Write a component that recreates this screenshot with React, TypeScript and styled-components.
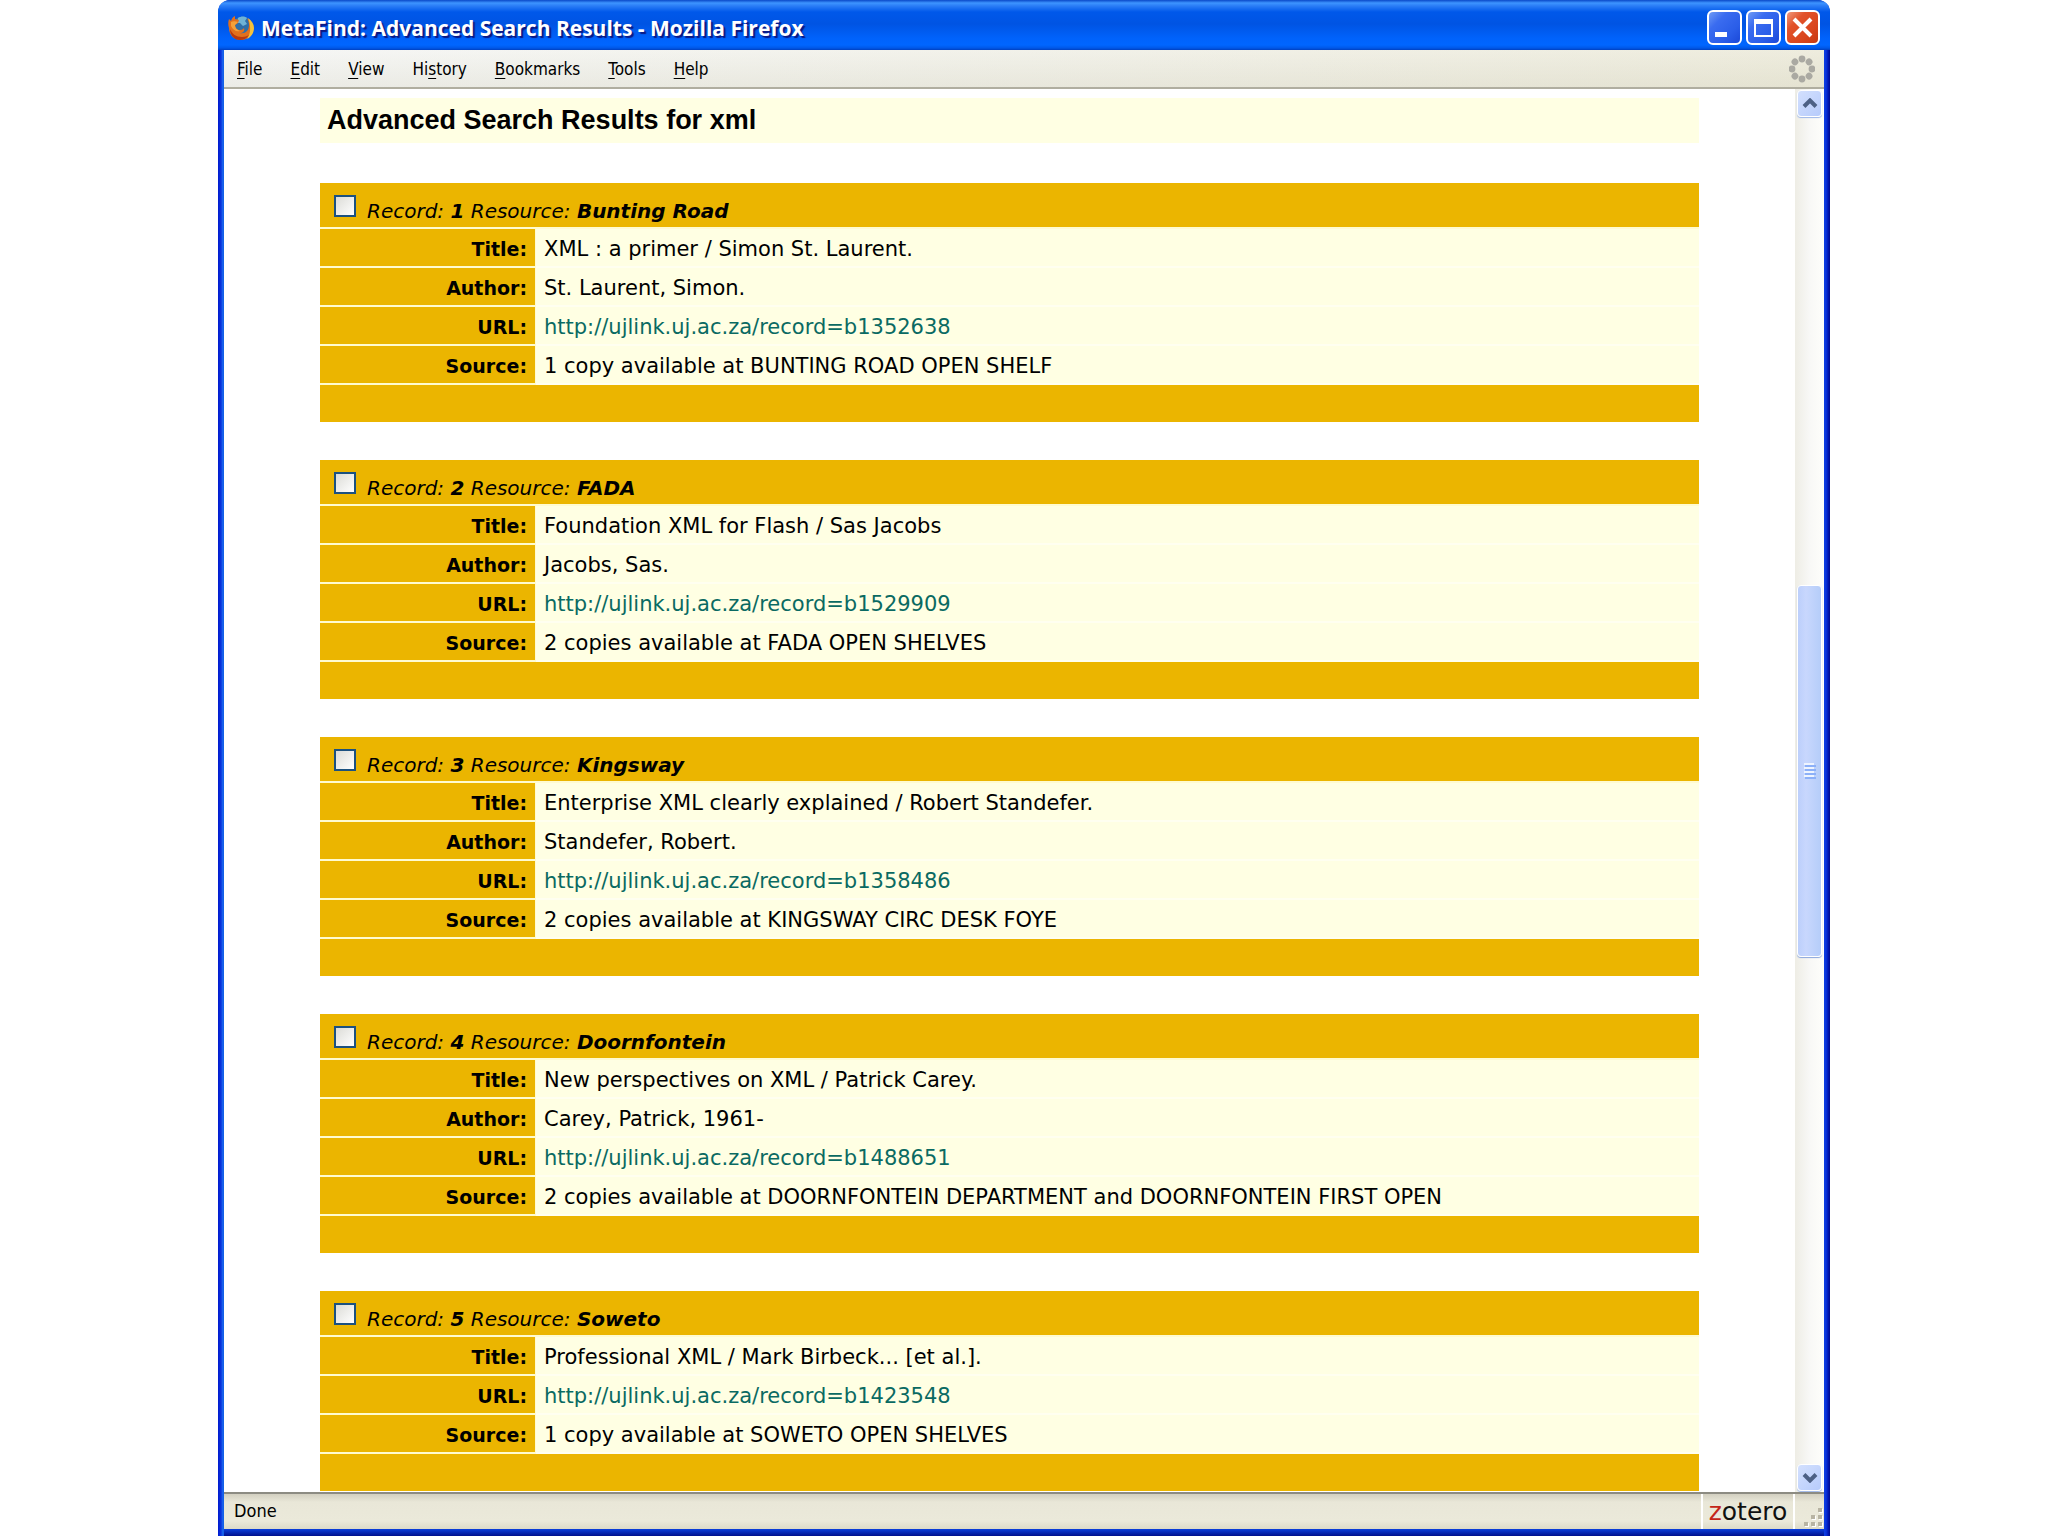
import React from "react";
import styled, { createGlobalStyle } from "styled-components";

const GlobalStyle = createGlobalStyle`
  * { box-sizing: border-box; }
  body { margin: 0; background: #fff; color: #000; }
`;

const UI_FONT = '"DejaVu Sans Condensed", "DejaVu Sans", sans-serif';
const PAGE_FONT = '"DejaVu Sans", Verdana, sans-serif';

const Window = styled.div`
  display: flex;
  flex-direction: column;
  height: 100vh;
  margin: 0 218px;
  overflow: hidden;
  border-radius: 12px 12px 0 0;
  background: #0842dc;
`;

const TitleBar = styled.header`
  flex: none;
  display: flex;
  align-items: center;
  gap: 6px;
  height: 50px;
  padding: 4px 10px 0;
  background: linear-gradient(#0a48c8 0, #3d94ff 3px, #2a7cf6 6px, #0058ea 12px, #0054e3 24px, #0062fb 38px, #0066ff 45px, #0058e8 48px, #0040c0 50px);
`;

const WindowTitle = styled.h1`
  flex: 1;
  margin: 0;
  padding-top: 2px;
  font: bold 21px/28px "Open Sans", "Trebuchet MS", sans-serif;
  color: #fff;
  text-shadow: 2px 2px 1px #0a1883;
  white-space: nowrap;
`;

const WindowButtons = styled.div`
  display: flex;
  gap: 4px;
`;

const WindowButton = styled.button<{ $close?: boolean }>`
  display: grid;
  place-items: center;
  width: 35px;
  height: 35px;
  padding: 0;
  border: 2px solid #fff;
  border-radius: 6px;
  background: ${(p) =>
    p.$close
      ? "linear-gradient(135deg, #f0997c, #e2532b 30%, #d9451c 70%, #c63a12)"
      : "linear-gradient(135deg, #6f9bf5, #3a6cf0 30%, #2a5de8 70%, #1b48d8)"};
`;

const Frame = styled.div`
  flex: 1;
  min-height: 0;
  display: flex;
  flex-direction: column;
  padding: 0 6px 7px;
  background:
    linear-gradient(90deg, #0019cf 0, #0a35dc 3px, #1f6cf0 5px, #0855dd 6px) left / 6px 100% no-repeat,
    linear-gradient(270deg, #000a8c 0, #0019b8 2px, #0a35dc 4px, #0d3fe2 6px) right / 6px 100% no-repeat,
    linear-gradient(0deg, #00108c 0, #0b3fdc 7px);
`;

const MenuBar = styled.nav`
  flex: none;
  display: flex;
  align-items: center;
  gap: 28px;
  height: 39px;
  padding: 0 9px 0 13px;
  border-bottom: 2px solid #b0aea0;
  background: linear-gradient(rgba(255, 255, 255, 0.15), rgba(210, 208, 190, 0.25)), linear-gradient(90deg, #f4f5f4, #ebe9d8);
`;

const MenuItem = styled.button`
  padding: 0;
  border: 0;
  background: none;
  font: 17px/24px ${UI_FONT};
  color: #000;

  u {
    text-underline-offset: 3px;
  }
`;

const Throbber = styled.svg`
  margin-left: auto;
`;

const Viewport = styled.div`
  flex: 1;
  min-height: 0;
  display: flex;
  background: #fff;
`;

const Page = styled.main`
  flex: 1;
  min-width: 0;
  overflow: hidden;
  padding: 9px 96px 0;
  font-family: ${PAGE_FONT};
`;

const Heading = styled.h2`
  margin: 0 0 40px;
  padding: 0 7px;
  background: #ffffe3;
  font: bold 27px/45px "Liberation Sans", Arial, sans-serif;
`;

const Record = styled.table`
  width: 100%;
  margin-bottom: 38px;
  border-collapse: separate;
  border-spacing: 0;
  table-layout: fixed;
`;

const LabelColumn = styled.col`
  width: 216px;
`;

const RecordHead = styled.th`
  height: 46px;
  padding: 12px 14px 0;
  border-bottom: 2px solid #fffbd0;
  background: #ebb500;
  text-align: left;
  vertical-align: top;
  font-weight: normal;
`;

const RecordLabel = styled.label`
  display: flex;
  align-items: flex-start;
  gap: 11px;
  font: italic 20px/24px ${PAGE_FONT};

  span {
    padding-top: 4px;
  }
`;

const Tick = styled.input`
  appearance: none;
  width: 22px;
  height: 22px;
  margin: 0;
  border: 2px solid #1c5180;
  background: linear-gradient(135deg, #dcdcd7, #fff);
`;

const Label = styled.th`
  height: 39px;
  padding: 2px 8px 0;
  border-bottom: 2px solid #fffbd0;
  border-right: 1px solid #fffbd0;
  background: #ebb500;
  text-align: right;
  font: bold 19px/26px ${PAGE_FONT};
`;

const Value = styled.td`
  height: 39px;
  padding: 3px 8px 0;
  border-bottom: 2px solid #fffff0;
  background: #ffffe3;
  font: 21px/26px ${PAGE_FONT};
  white-space: nowrap;
`;

const RecordFoot = styled.td`
  height: 37px;
  padding: 0;
  background: #ebb500;
`;

const Link = styled.a`
  color: #0a6a62;
  text-decoration: none;
`;

const ScrollBar = styled.div`
  flex: none;
  display: flex;
  flex-direction: column;
  width: 29px;
  padding: 1px 2px;
  background: linear-gradient(90deg, #eeede5, #f8f8f6 50%, #fefefb);
`;

const ScrollButton = styled.button`
  flex: none;
  display: grid;
  place-items: center;
  width: 25px;
  height: 27px;
  padding: 0;
  border: 1px solid #fff;
  border-radius: 4px;
  background: linear-gradient(135deg, #d3e0fe, #b6cbfb);
  box-shadow: 0 1px 1px #9db6e8;
`;

const ScrollSpace = styled.div<{ $share: number }>`
  flex: ${(p) => p.$share} 0 0;
`;

const ScrollThumb = styled.div`
  flex: 371 0 0;
  display: grid;
  place-items: center;
  width: 25px;
  border: 1px solid #fff;
  border-radius: 4px;
  background: linear-gradient(90deg, #bccffb, #c8d7fd 35%, #b5cdf9);
  box-shadow: 0 1px 1px #8aa6dc;
`;

const StatusBar = styled.footer`
  flex: none;
  display: flex;
  align-items: stretch;
  height: 37px;
  border-top: 2px solid #8c8b82;
  background: linear-gradient(#d2cfc0 0, #e9e7d8 8px, #ebe9da 27px, #dcdac8 35px);
  font: 18px/34px ${UI_FONT};
`;

const StatusText = styled.div`
  flex: 1;
  padding-left: 10px;
`;

const Zotero = styled.button`
  width: 94px;
  padding: 0;
  border: 0;
  border-left: 2px solid #fff;
  border-right: 2px solid #fff;
  background: none;
  font: 25px/30px ${PAGE_FONT};
  color: #111;

  span {
    color: #c4261a;
  }
`;

const ResizeGrip = styled.svg`
  flex: none;
  align-self: flex-end;
`;

type Row = { label: string; value: string; link?: boolean };
type RecordData = { resource: string; rows: Row[] };

const record = (resource: string, title: string, author: string | null, id: string, source: string): RecordData => ({
  resource,
  rows: [
    { label: "Title:", value: title },
    ...(author ? [{ label: "Author:", value: author }] : []),
    { label: "URL:", value: `http://ujlink.uj.ac.za/record=${id}`, link: true },
    { label: "Source:", value: source },
  ],
});

const records: RecordData[] = [
  record("Bunting Road", "XML : a primer / Simon St. Laurent.", "St. Laurent, Simon.", "b1352638", "1 copy available at BUNTING ROAD OPEN SHELF"),
  record("FADA", "Foundation XML for Flash / Sas Jacobs", "Jacobs, Sas.", "b1529909", "2 copies available at FADA OPEN SHELVES"),
  record("Kingsway", "Enterprise XML clearly explained / Robert Standefer.", "Standefer, Robert.", "b1358486", "2 copies available at KINGSWAY CIRC DESK FOYE"),
  record("Doornfontein", "New perspectives on XML / Patrick Carey.", "Carey, Patrick, 1961-", "b1488651", "2 copies available at DOORNFONTEIN DEPARTMENT and DOORNFONTEIN FIRST OPEN"),
  record("Soweto", "Professional XML / Mark Birbeck... [et al.].", null, "b1423548", "1 copy available at SOWETO OPEN SHELVES"),
];

const menus = [
  ["", "F", "ile"],
  ["", "E", "dit"],
  ["", "V", "iew"],
  ["Hi", "s", "tory"],
  ["", "B", "ookmarks"],
  ["", "T", "ools"],
  ["", "H", "elp"],
];

const FirefoxIcon = () => (
  <svg width="27" height="27" viewBox="0 0 27 27" aria-hidden="true">
    <circle cx="14" cy="12" r="9.5" fill="#2f6ea8" />
    <path d="M10 4c3-2 7-2 9 0l-2 3 2 3-4 2-3-3-3 0z" fill="#6fb3d6" />
    <path d="M1 5l2 2c1-3 2-4 4-5l0 3 4 1-1 3-3 2c0 3 2 5 5 5 2 0 3-1 4-2 1 3-1 5-4 5 5 1 9-2 9-8 0-3-1-5-2-7 4 3 6 6 6 10 0 7-5 12-12 12S1 21 1 14c-1-3-1-6 0-9z" fill="#e2701c" />
    <path d="M20 4c4 3 6 6 6 10 0 5-3 9-7 11 4-5 4-14 1-21z" fill="#f6c23c" />
    <path d="M3 8c2-1 4-1 7 0l-3 3c0 3 2 5 5 6-4 1-7-1-9-5z" fill="#f4a03a" />
    <path d="M2 15c2 5 6 8 12 8 3 0 5-1 7-2-2 3-5 5-9 5-6 0-10-5-10-11z" fill="#b8390f" />
  </svg>
);

const Chevron = ({ down }: { down?: boolean }) => (
  <svg width="16" height="11" viewBox="0 0 16 11" aria-hidden="true">
    <path d={down ? "M2 2.5l6 6 6-6" : "M2 8.5l6-6 6 6"} fill="none" stroke="#4d6185" strokeWidth="4" />
  </svg>
);

export default function App() {
  return (
    <>
      <GlobalStyle />
      <Window>
        <TitleBar>
          <FirefoxIcon />
          <WindowTitle>MetaFind: Advanced Search Results - Mozilla Firefox</WindowTitle>
          <WindowButtons>
            <WindowButton aria-label="Minimize">
              <svg width="31" height="31" aria-hidden="true">
                <path d="M6 20h12v5H6z" fill="#fff" />
              </svg>
            </WindowButton>
            <WindowButton aria-label="Maximize">
              <svg width="31" height="31" aria-hidden="true">
                <path d="M6 7h19v18H6zM8 12v11h15V12z" fill="#fff" fillRule="evenodd" />
              </svg>
            </WindowButton>
            <WindowButton $close aria-label="Close">
              <svg width="31" height="31" aria-hidden="true">
                <path d="M7 7l17 17M24 7L7 24" stroke="#fff" strokeWidth="4" />
              </svg>
            </WindowButton>
          </WindowButtons>
        </TitleBar>
        <Frame>
          <MenuBar>
            {menus.map(([before, key, after]) => (
              <MenuItem key={after}>
                {before}
                <u>{key}</u>
                {after}
              </MenuItem>
            ))}
            <Throbber width="26" height="28" viewBox="-13 -14 26 28" aria-hidden="true">
              {[0, 45, 90, 135, 180, 225, 270, 315].map((angle) => (
                <circle key={angle} cx="0" cy="-10" r="3.4" fill="#aaa9a2" transform={`rotate(${angle})`} />
              ))}
            </Throbber>
          </MenuBar>
          <Viewport>
            <Page>
              <Heading>Advanced Search Results for xml</Heading>
              {records.map((item, index) => (
                <Record key={item.resource}>
                  <colgroup>
                    <LabelColumn />
                    <col />
                  </colgroup>
                  <tbody>
                    <tr>
                      <RecordHead colSpan={2}>
                        <RecordLabel>
                          <Tick type="checkbox" />
                          <span>
                            Record: <b>{index + 1}</b> Resource: <b>{item.resource}</b>
                          </span>
                        </RecordLabel>
                      </RecordHead>
                    </tr>
                    {item.rows.map((row) => (
                      <tr key={row.label}>
                        <Label scope="row">{row.label}</Label>
                        <Value>{row.link ? <Link href={row.value}>{row.value}</Link> : row.value}</Value>
                      </tr>
                    ))}
                    <tr>
                      <RecordFoot colSpan={2} />
                    </tr>
                  </tbody>
                </Record>
              ))}
            </Page>
            <ScrollBar>
              <ScrollButton aria-label="Scroll up">
                <Chevron />
              </ScrollButton>
              <ScrollSpace $share={469} />
              <ScrollThumb>
                <svg width="12" height="16" aria-hidden="true">
                  <path d="M0 1h10M0 5h10M0 9h10M0 13h10" stroke="#eef4fe" strokeWidth="2" />
                  <path d="M1 3h11M1 7h11M1 11h11M1 15h11" stroke="#8cb0f8" strokeWidth="2" />
                </svg>
              </ScrollThumb>
              <ScrollSpace $share={509} />
              <ScrollButton aria-label="Scroll down">
                <Chevron down />
              </ScrollButton>
            </ScrollBar>
          </Viewport>
          <StatusBar>
            <StatusText>Done</StatusText>
            <Zotero>
              <span>z</span>otero
            </Zotero>
            <ResizeGrip width="29" height="23" viewBox="0 0 29 23" aria-hidden="true">
              <path d="M24 3h4v4h-4zM17 10h4v4h-4zM24 10h4v4h-4zM10 17h4v4h-4zM17 17h4v4h-4zM24 17h4v4h-4z" fill="#fff" />
              <path d="M23 2h4v4h-4zM16 9h4v4h-4zM23 9h4v4h-4zM9 16h4v4H9zM16 16h4v4h-4zM23 16h4v4h-4z" fill="#b8b4a3" />
            </ResizeGrip>
          </StatusBar>
        </Frame>
      </Window>
    </>
  );
}
